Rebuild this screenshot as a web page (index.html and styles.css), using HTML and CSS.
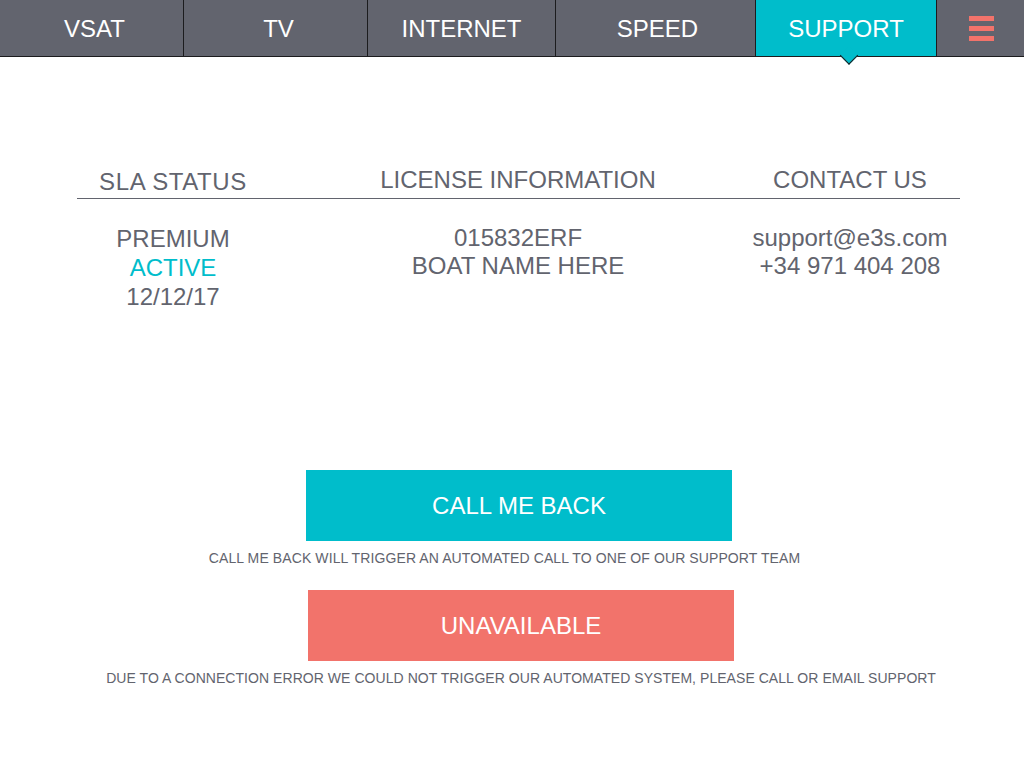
FILE: index.html
```html
<!DOCTYPE html>
<html lang="en">
<head>
<meta charset="utf-8">
<title>Support</title>
<link rel="stylesheet" href="styles.css">
</head>
<body>
<nav class="nav">
  <a class="nav-item w-vsat">VSAT</a>
  <a class="nav-item w-tv">TV</a>
  <a class="nav-item w-internet">INTERNET</a>
  <a class="nav-item w-speed">SPEED</a>
  <a class="nav-item w-support active">SUPPORT</a>
  <a class="nav-item w-menu menu" aria-label="Menu">
    <span class="bar"></span><span class="bar"></span><span class="bar"></span>
  </a>
</nav>

<main class="content">
  <section class="info">
    <div class="info-head">
      <h2 class="head sla">SLA STATUS</h2>
      <h2 class="head mid">LICENSE INFORMATION</h2>
      <h2 class="head">CONTACT US</h2>
    </div>
    <div class="info-body">
      <div class="col">
        <div>PREMIUM</div>
        <div class="active-text">ACTIVE</div>
        <div>12/12/17</div>
      </div>
      <div class="col tight mid">
        <div>015832ERF</div>
        <div>BOAT NAME HERE</div>
      </div>
      <div class="col tight">
        <div>support@e3s.com</div>
        <div>+34 971 404 208</div>
      </div>
    </div>
  </section>

  <section class="actions">
    <button class="btn btn-call">CALL ME BACK</button>
    <p class="note note-call">CALL ME BACK WILL TRIGGER AN AUTOMATED CALL TO ONE OF OUR SUPPORT TEAM</p>
    <button class="btn btn-unavail">UNAVAILABLE</button>
    <p class="note note-unavail">DUE TO A CONNECTION ERROR WE COULD NOT TRIGGER OUR AUTOMATED SYSTEM, PLEASE CALL OR EMAIL SUPPORT</p>
  </section>
</main>
</body>
</html>
```

FILE: styles.css
```css
* { box-sizing: border-box; }

html, body {
  margin: 0;
  padding: 0;
  background: #ffffff;
}

body {
  font-family: "Liberation Sans", Arial, Helvetica, sans-serif;
  color: #62646e;
  width: 1024px;
  height: 768px;
  overflow: hidden;
}

/* ---------- NAV ---------- */
.nav {
  display: flex;
  height: 57px;
  background: #62646e;
  border-bottom: 1px solid #1c1c1e;
}

.nav-item {
  position: relative;
  display: flex;
  align-items: center;
  justify-content: center;
  height: 56px;
  padding-top: 2px;
  color: #ffffff;
  font-size: 24px;
  border-right: 1px solid #1c1c1e;
  text-decoration: none;
}

.w-vsat { width: 184px; padding-left: 6px; }
.w-tv { width: 184px; padding-left: 6px; }
.w-internet { width: 188px; }
.w-speed { width: 200px; padding-left: 4px; }
.w-support { width: 181px; }
.w-menu {
  flex: 1;
  border-right: none;
  flex-direction: column;
  gap: 5px;
  padding-top: 0;
  padding-left: 1px;
}

.nav-item.active {
  background: #00bdcb;
}

.nav-item.active::after {
  content: "";
  position: absolute;
  left: 50%;
  bottom: -6px;
  width: 12px;
  height: 12px;
  margin-left: 3px;
  background: #00bdcb;
  border-right: 1px solid #1c1c1e;
  border-bottom: 1px solid #1c1c1e;
  transform: translateX(-50%) rotate(45deg);
  z-index: 2;
}

.bar {
  display: block;
  width: 25px;
  height: 5px;
  background: #f2736b;
}

/* ---------- INFO ---------- */
.content {
  display: flex;
  flex-direction: column;
}

.info {
  margin: 110px 0 0 77px;
  width: 883px;
}

.info-head,
.info-body {
  display: grid;
  grid-template-columns: 192px 1fr 220px;
}

.mid {
  padding-left: 27px;
}

.info-head {
  border-bottom: 1px solid #62646e;
  padding-bottom: 5px;
}

.head {
  margin: 0;
  font-weight: normal;
  font-size: 24px;
  line-height: 26px;
  text-align: center;
  white-space: nowrap;
}

.head.sla {
  padding-top: 2px;
  margin-bottom: -2px;
  letter-spacing: 0.6px;
}

.info-body {
  padding-top: 25px;
}

.col {
  text-align: center;
  font-size: 24px;
  line-height: 29px;
  white-space: nowrap;
}

.col.tight {
  line-height: 28px;
}

.active-text {
  color: #00bdcb;
}

/* ---------- ACTIONS ---------- */
.actions {
  display: flex;
  flex-direction: column;
  align-items: center;
  margin-top: 159px;
}

.btn {
  width: 426px;
  height: 71px;
  border: none;
  color: #ffffff;
  font-family: "Liberation Sans", Arial, Helvetica, sans-serif;
  font-size: 24px;
  padding: 0;
  cursor: pointer;
}

.btn-call {
  background: #00bdcb;
  margin-left: 14px;
}

.btn-unavail {
  background: #f2736b;
  margin-left: 18px;
}

.note {
  margin: 9px 0 0;
  font-size: 14px;
  line-height: 16px;
  letter-spacing: 0.1px;
  color: #62646e;
  white-space: nowrap;
}

.note-call {
  margin-right: 15px;
  margin-bottom: 24px;
}

.note-unavail {
  margin-left: 18px;
  letter-spacing: 0.05px;
}
```
